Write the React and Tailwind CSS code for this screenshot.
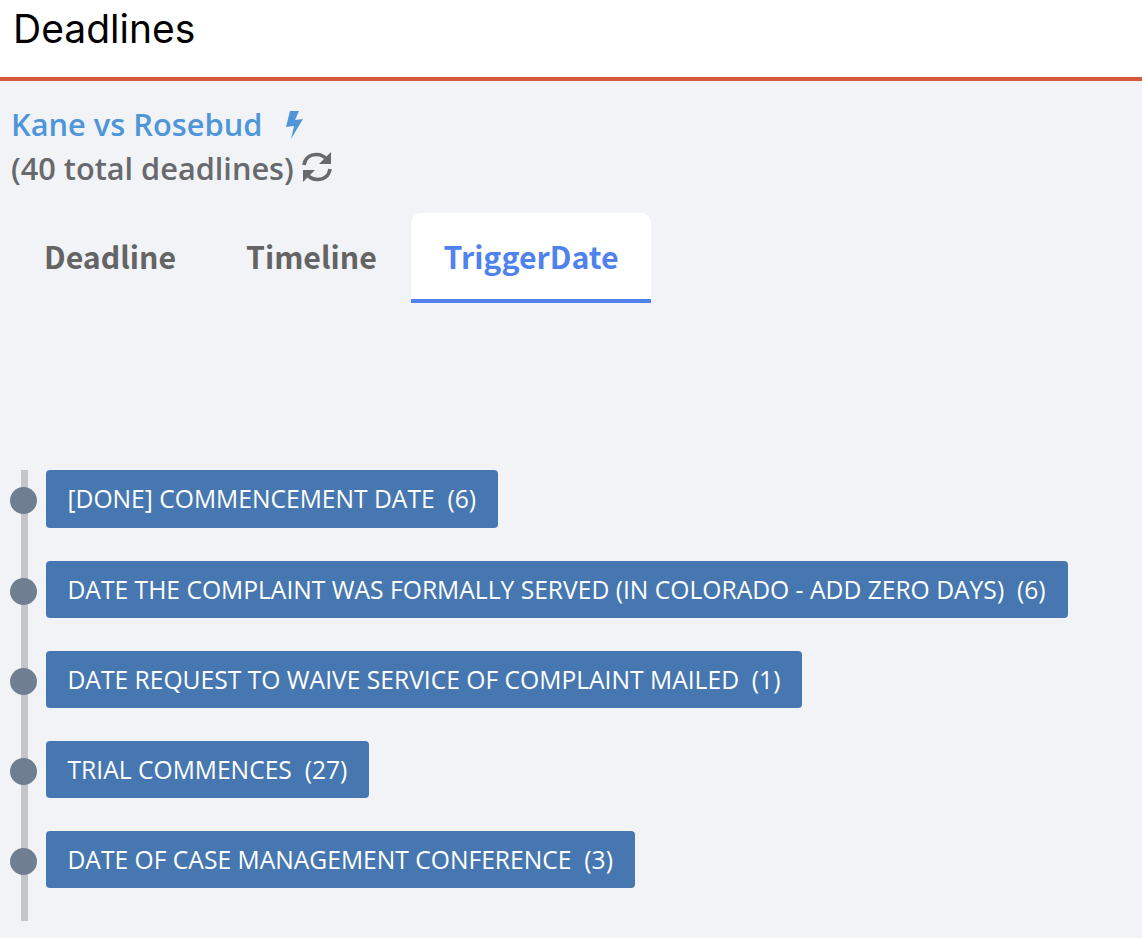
const triggers = [
  { name: '[DONE] COMMENCEMENT DATE', count: 6 },
  { name: 'DATE THE COMPLAINT WAS FORMALLY SERVED (IN COLORADO - ADD ZERO DAYS)', count: 6 },
  { name: 'DATE REQUEST TO WAIVE SERVICE OF COMPLAINT MAILED', count: 1 },
  { name: 'TRIAL COMMENCES', count: 27 },
  { name: 'DATE OF CASE MANAGEMENT CONFERENCE', count: 3 },
]

function Bolt() {
  return (
    <svg width="18" height="29" viewBox="0 0 18 29" className="ml-[24px] mt-[3px]">
      <polygon points="4,0 13,0 9,9 17,8 5,28 8,15 0,16" fill="#4f96d8" />
    </svg>
  )
}

function Refresh() {
  return (
    <svg width="30" height="32" viewBox="0 0 30 32" className="ml-[8px] mb-[2px]" fill="none">
      <path d="M2 14 C3 7 8 3.5 14.5 3.5 C19 3.5 22.5 5.5 25 8.5" stroke="#68696d" strokeWidth="3.6" />
      <polygon points="29,1 29,13 17,13" fill="#68696d" />
      <path d="M28 18 C27 25 22 28.5 15.5 28.5 C11 28.5 7.5 26.5 5 23.5" stroke="#68696d" strokeWidth="3.6" />
      <polygon points="1,31 1,19 13,19" fill="#68696d" />
    </svg>
  )
}

function App() {
  return (
    <div className="min-h-[938px] bg-[#f1f3f7] font-['Open_Sans','Noto_Sans',sans-serif]">
      {/* Header */}
      <header className="h-[81px] bg-white border-b-4 border-[#d9563f] pl-[13px] pt-[3px]">
        <h1 className="font-['Inter',sans-serif] text-[39px] leading-[52px] text-black">Deadlines</h1>
      </header>

      <div className="pl-[11px] pt-[23px]">
        <div className="flex items-center h-[40px]">
          <a className="text-[30.8px] leading-[40px] font-semibold text-[#4f96d8]">Kane vs Rosebud</a>
          <Bolt />
        </div>
        <div className="flex items-center h-[48px]">
          <span className="text-[30.7px] leading-[40px] font-semibold text-[#68696d]">(40 total deadlines)</span>
          <Refresh />
        </div>
      </div>

      {/* Tabs */}
      <div className="flex mt-[21px] font-['Noto_Sans_CJK_SC',sans-serif] font-semibold text-[30.3px] leading-[40px] text-[#646464]">
        <div className="w-[211px] h-[90px] pl-[44px] pt-[23px]">Deadline</div>
        <div className="w-[200px] h-[90px] pl-[35px] pt-[23px]">Timeline</div>
        <div className="w-[240px] h-[90px] pt-[23px] text-center bg-white rounded-t-[10px] border-b-4 border-[#4f82ec] text-[#4f82ec]">TriggerDate</div>
      </div>

      {/* Timeline */}
      <div className="ml-[21px] mt-[167px] w-fit h-[451px] border-l-[7px] border-[#c4c5c9] flex flex-col gap-[33px]">
        {triggers.map((t) => (
          <div key={t.name} className="relative pl-[18px]">
            <span className="absolute left-[-18px] top-1/2 mt-[-12px] w-[27px] h-[27px] rounded-full bg-[#6f7f91]" />
            <div className="w-fit h-[57px] [div:first-child>&]:h-[58px] pl-[21.5px] pr-[22px] pt-[1px] flex items-center rounded-[4px] bg-[#4677b0] text-white text-[24.63px] whitespace-pre">
              {t.name}  ({t.count})
            </div>
          </div>
        ))}
      </div>
    </div>
  )
}

export default App
